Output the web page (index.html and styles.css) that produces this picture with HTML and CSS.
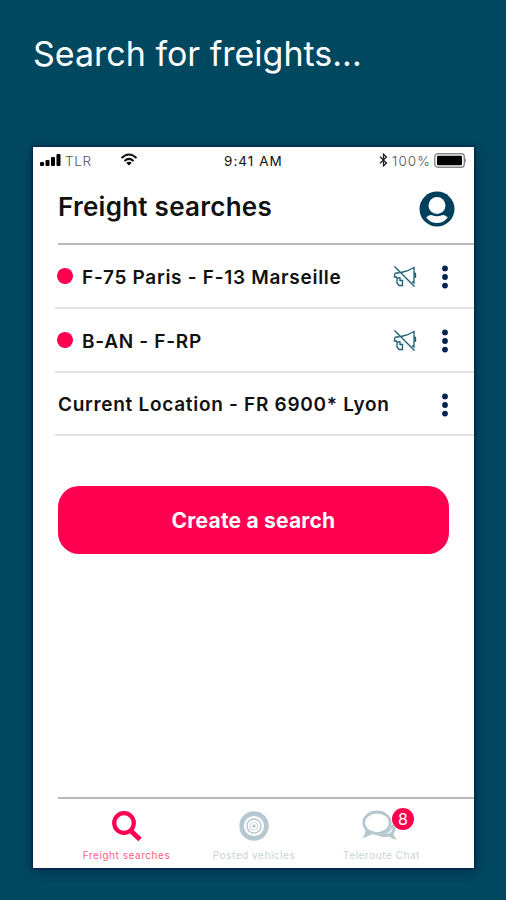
FILE: index.html
```html
<!DOCTYPE html>
<html lang="en">
<head>
<meta charset="utf-8">
<title>Freight searches</title>
<link rel="stylesheet" href="styles.css">
</head>
<body>
<svg class="defs" aria-hidden="true">
  <symbol id="muted" viewBox="0 0 24 24"><path d="M1.500 1.500 21.500 21.500M8 7.500 14 6 21 2.500V18L19 16.500M21 8.500h1.500V12H21M6.500 8H3L1.500 9.500V12H4M4 12.500V18L6 20.500H9.500V15.500H7V13H4"/></symbol>
  <symbol id="dots" viewBox="0 0 8 26"><circle cx="4" cy="4.400" r="2.900"/><circle cx="4" cy="13" r="2.900"/><circle cx="4" cy="21.600" r="2.900"/></symbol>
</svg>
<h1 class="headline"><span>Search for freights...</span></h1>
<main class="phone">
  <div class="status">
    <svg class="signal" viewBox="0 0 21 12"><rect x="0" y="8" width="4" height="4" rx="1"/><rect x="5.500" y="6" width="4" height="6" rx="1"/><rect x="11" y="3" width="4" height="9" rx="1"/><rect x="16.500" y="0" width="4" height="12" rx="1"/></svg>
    <span class="carrier">TLR</span>
    <svg class="wifi" viewBox="0 0 18 13"><path d="M1.500 5Q9-2 16.500 5M4.500 8Q9 3.800 13.500 8" fill="none" stroke="#111" stroke-width="2.100"/><path d="M6.300 9.800Q9 7.600 11.700 9.800L9 12.500z"/></svg>
    <span class="time">9:41 AM</span>
    <svg class="bluetooth" viewBox="0 0 9 14"><path d="M1 3.800 7.500 10 4.500 12.800V1.200L7.500 4 1 10.200" fill="none" stroke="#222" stroke-width="1.300"/></svg>
    <span class="percent">100%</span>
    <svg class="battery" viewBox="0 0 33 15"><rect x=".8" y=".8" width="29.500" height="13.400" rx="3" fill="#fff" stroke="#888" stroke-width="1.400"/><rect x="3" y="2.700" width="25" height="9.600" rx="1"/><path d="M31 5q2 2.500 0 5z" fill="#888"/></svg>
  </div>
  <header class="header">
    <h2><span>Freight searches</span></h2>
    <svg class="avatar" viewBox="0 0 36 36"><circle cx="18" cy="18" r="17.500" fill="#003f5c"/><circle cx="18" cy="14.500" r="8.500" fill="#fff"/><path d="M7.200 26.500Q10 23.200 13 24.200Q18 26.500 23 24.200Q26 23.200 28.800 26.500Q24.500 32 18 32T7.200 26.500z" fill="#fff"/></svg>
  </header>
  <ul class="list">
    <li class="row"><i class="mark"></i><span class="label">F-75 Paris - F-13 Marseille</span><svg class="muted"><use href="#muted"/></svg><svg class="dots"><use href="#dots"/></svg></li>
    <li class="row"><i class="mark"></i><span class="label">B-AN - F-RP</span><svg class="muted"><use href="#muted"/></svg><svg class="dots"><use href="#dots"/></svg></li>
    <li class="row"><span class="label">Current Location - FR 6900* Lyon</span><svg class="dots"><use href="#dots"/></svg></li>
  </ul>
  <button class="create"><span>Create a search</span></button>
  <nav class="tabs">
    <a class="tab active">
      <svg viewBox="0 0 32 32"><circle cx="13" cy="13" r="9.800" fill="none" stroke="#ff0050" stroke-width="4.200"/><path d="M20.500 21.500 29 29.500" stroke="#ff0050" stroke-width="5"/></svg>
      <span>Freight searches</span>
    </a>
    <a class="tab">
      <svg viewBox="0 0 32 32" fill="none" stroke="#b5c7cf"><circle cx="16" cy="16" r="12.400" stroke-width="4.600"/><circle cx="16" cy="16" r="7" stroke-width="1.400"/><circle cx="16" cy="16" r="4" stroke-width=".7"/><circle cx="16" cy="16" r="1.200" fill="#b5c7cf"/></svg>
      <span>Posted vehicles</span>
    </a>
    <a class="tab chat">
      <svg viewBox="0 0 38 32"><path d="M31 14C36 17 35 21 32.500 23.500Q33 26.500 36 29.500Q31 29 27.500 26.500Q21 28 16 25Q28 25 31 14z" fill="#b5c7cf"/><path d="M31.500 17.500C32 21 29.500 24 24 24.300Q29 22.500 31.500 17.500z" fill="#fff"/><ellipse cx="16" cy="12.800" rx="13.200" ry="10.800" fill="#fff" stroke="#b5c7cf" stroke-width="2.800"/><path d="M4.800 19Q4.500 24 1.500 28Q7.500 27 11.500 23.500z" fill="#b5c7cf"/></svg>
      <b class="badge">8</b>
      <span>Teleroute Chat</span>
    </a>
  </nav>
</main>
</body>
</html>
```

FILE: styles.css
```css
* { box-sizing: border-box; margin: 0; padding: 0; }
body { width: 506px; height: 900px; overflow: hidden; background: #004860; font-family: Inter, "Liberation Sans", sans-serif; color: #111; }
svg { display: block; flex: none; }
.defs { width: 0; height: 0; position: absolute; }
.headline { height: 147px; padding: 32px 0 0 33px; color: #fff; font-size: 34px; font-weight: 400; line-height: 44px; white-space: nowrap; letter-spacing: 0; }
.phone { width: 441px; height: 721px; margin-left: 33px; background: #fff; display: flex; flex-direction: column; box-shadow: 0 0 2px 1px #002449, 1px 3px 12px #002c48; }
.status { height: 27px; padding: 0 7px; display: flex; align-items: center; white-space: nowrap; font-size: 13.500px; line-height: 16px; }
.signal { width: 21px; height: 12px; margin-bottom: 2px; }
.carrier { width: 32px; margin-left: 4px; color: #555; font-weight: 300; letter-spacing: .6px; }
.wifi { width: 18px; height: 13px; margin: 0 0 2px 23px; }
.time { width: 64px; margin-left: 86px; letter-spacing: 1.050px; }
.bluetooth { width: 9px; height: 14px; margin: 0 0 2px 91px; }
.percent { width: 42px; margin-left: 4px; color: #555; font-weight: 300; letter-spacing: 1.100px; }
.battery { width: 33px; height: 15px; margin: 0 0 1px; }
.header { height: 71px; margin-left: 25px; padding-right: 19px; border-bottom: 2px solid #b8b8b8; display: flex; align-items: center; justify-content: space-between; }
h2 { font-size: 26px; font-weight: 600; line-height: 32px; padding-bottom: 4px; white-space: nowrap; letter-spacing: .26px; }
.avatar { width: 36px; height: 36px; }
.list { list-style: none; margin-left: 22px; }
.row { height: 64px; padding: 2px 25px 0 3px; display: flex; align-items: center; border-bottom: 2px solid #e1e3e3; }
.row:last-child { height: 63px; }
.mark { width: 16px; height: 16px; border-radius: 50%; background: #ff0050; margin: 0 9px 2px -1px; flex: none; }
.label { flex: 1; font-size: 19px; font-weight: 600; white-space: nowrap; letter-spacing: .71px; }
.muted { width: 24px; height: 24px; fill: none; stroke: #175d77; stroke-width: 1.300; margin-right: 24px; }
.dots { width: 8px; height: 26px; fill: #002452; }
.create { width: 391px; height: 68px; margin: 50px 0 0 25px; border: 0; border-radius: 21px; background: #ff0050; color: #fff; font: 700 21px Inter, sans-serif; white-space: nowrap; letter-spacing: .2px; }
.tabs { height: 71px; margin: auto 0 0 25px; padding-right: 29px; border-top: 2px solid #b8b8b8; display: grid; grid-template-columns: 137px 118px 137px; }
.tab { position: relative; display: flex; flex-direction: column; align-items: center; padding-top: 11px; color: #c8d4d8; font-size: 10px; line-height: 14px; white-space: nowrap; letter-spacing: .55px; }
.tab svg { width: 32px; height: 32px; }
.tab > span { margin-top: 6px; }
.active { color: #ff5d86; }
.chat svg { width: 38px; margin-left: -4px; }
.badge { position: absolute; left: 79px; top: 9px; width: 22px; height: 22px; border-radius: 50%; background: #ff0050; color: #fff; font-size: 16px; font-weight: 400; line-height: 22px; text-align: center; letter-spacing: 0; }
```
